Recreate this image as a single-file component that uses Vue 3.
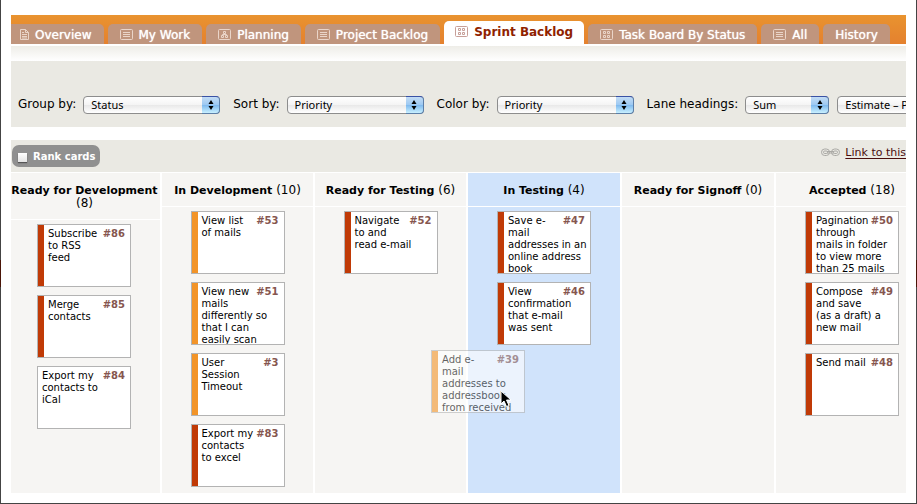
<script setup>
import { ref } from 'vue'

const tabs = [
  { label: 'Overview', icon: 'page' },
  { label: 'My Work', icon: 'list' },
  { label: 'Planning', icon: 'tree' },
  { label: 'Project Backlog', icon: 'list' },
  { label: 'Sprint Backlog', icon: 'grid', active: true },
  { label: 'Task Board By Status', icon: 'grid' },
  { label: 'All', icon: 'list' },
  { label: 'History', icon: null },
]

const filters = ref([
  { id: 'group', label: 'Group by:', value: 'Status' },
  { id: 'sort', label: 'Sort by:', value: 'Priority' },
  { id: 'color', label: 'Color by:', value: 'Priority' },
  { id: 'lane', label: 'Lane headings:', value: 'Sum', small: true },
  { id: 'property', label: '', value: 'Estimate – Points' },
])

const rank = ref(false)

// Each card holds its first line, which shares a row with the number, and the rest.
const lanes = [
  {
    name: 'Ready for Development', count: 8, cards: [
      { id: 86, first: 'Subscribe', rest: 'to RSS\nfeed', color: 'red' },
      { id: 85, first: 'Merge', rest: 'contacts', color: 'red' },
      { id: 84, first: 'Export my', rest: 'contacts to\niCal', color: 'plain' },
    ],
  },
  {
    name: 'In Development', count: 10, cards: [
      { id: 53, first: 'View list', rest: 'of mails', color: 'orange' },
      { id: 51, first: 'View new', rest: 'mails\ndifferently so\nthat I can\neasily scan', color: 'orange' },
      { id: 3, first: 'User', rest: 'Session\nTimeout', color: 'orange' },
      { id: 83, first: 'Export my', rest: 'contacts\nto excel', color: 'red' },
    ],
  },
  {
    name: 'Ready for Testing', count: 6, cards: [
      { id: 52, first: 'Navigate', rest: 'to and\nread e-mail', color: 'red' },
      { id: 39, first: 'Add e-', rest: 'mail\naddresses to\naddressbook\nfrom received', color: 'orange', dragged: true },
    ],
  },
  {
    name: 'In Testing', count: 4, target: true, cards: [
      { id: 47, first: 'Save e-', rest: 'mail\naddresses in an\nonline address\nbook', color: 'red' },
      { id: 46, first: 'View', rest: 'confirmation\nthat e-mail\nwas sent', color: 'red' },
    ],
  },
  { name: 'Ready for Signoff', count: 0, cards: [] },
  {
    name: 'Accepted', count: 18, cards: [
      { id: 50, first: 'Pagination', rest: 'through\nmails in folder\nto view more\nthan 25 mails', color: 'red' },
      { id: 49, first: 'Compose', rest: 'and save\n(as a draft) a\nnew mail', color: 'red' },
      { id: 48, first: 'Send mail', rest: '', color: 'red' },
    ],
  },
]
</script>

<template>
  <div class="frame">
    <div class="page">
      <nav class="tabs" aria-label="Project tabs">
        <a
          v-for="tab in tabs"
          :key="tab.label"
          href="#"
          class="tab"
          :class="{ active: tab.active, 'tab-page': tab.icon === 'page' }"
        >
          <svg v-if="tab.icon === 'page'" class="icon" width="9" height="11" viewBox="0 0 9 11">
            <path d="M.5.5h5l3 3v7h-8zM5.5.5v3h3M2 3.5h2M2 5.5h5M2 7.5h5M2 9h5" />
          </svg>
          <svg v-else-if="tab.icon" class="icon" width="13" height="11" viewBox="0 0 13 11">
            <rect x=".5" y=".5" width="12" height="10" rx="1" />
            <path v-if="tab.icon === 'list'" d="M3 3.5h7M3 5.5h7M3 7.5h7" />
            <path v-else-if="tab.icon === 'tree'" d="M5.500 2.500h2v2h-2zM3.500 6.500h2v2h-2zM7.500 6.500h2v2h-2zM6.500 4.500v1M4.500 6.500v-1h4v1" />
            <path v-else d="M3.500 2.500h2v2h-2zM7.500 2.500h2v2h-2zM3.500 6.500h2v2h-2zM7.500 6.500h2v2h-2z" />
          </svg>
          <span>{{ tab.label }}</span>
        </a>
      </nav>
      <div class="tab-shadow"></div>

      <form class="filters" @submit.prevent>
        <div v-for="f in filters" :key="f.id" class="filter" :class="{ joined: !f.label }">
          <label v-if="f.label" :for="f.id">{{ f.label }}</label>
          <span class="picker" :class="{ small: f.small }">
            <select :id="f.id" v-model="f.value" :aria-label="f.label || 'Lane property'">
              <option>{{ f.value }}</option>
            </select>
            <span class="cap">
              <svg width="6" height="10" viewBox="0 0 6 10"><path d="M3 0l2.500 4h-5zM3 10l2.500-4h-5z" /></svg>
            </span>
          </span>
        </div>
      </form>

      <div class="toolbar">
        <label class="rank" for="rank">
          <input id="rank" v-model="rank" type="checkbox" />
          <span>Rank cards</span>
        </label>
        <a href="#" class="link">
          <svg width="19" height="9" viewBox="0 0 19 9">
            <g fill="none" stroke="#aaa9a5">
              <rect x=".5" y="1" width="8" height="6.500" rx="3.200" />
              <rect x="2.500" y="3" width="4" height="2.500" rx="1.200" />
              <rect x="10.500" y="1" width="8" height="6.500" rx="3.200" />
              <rect x="12.500" y="3" width="4" height="2.500" rx="1.200" />
              <path d="M6 3.500h7M6 5h7" />
            </g>
          </svg>
          <span>Link to this</span>
        </a>
      </div>

      <main class="board">
        <section v-for="lane in lanes" :key="lane.name" class="lane" :class="{ target: lane.target }">
          <h2>{{ lane.name }} <span>({{ lane.count }})</span></h2>
          <div class="cards">
            <article
              v-for="card in lane.cards"
              :key="card.id"
              class="card"
              :class="[card.color, { dragged: card.dragged }]"
            >
              <div class="first"><span>{{ card.first }}</span><b>#{{ card.id }}</b></div>
              <div v-if="card.rest" class="rest">{{ card.rest }}</div>
            </article>
          </div>
        </section>
        <svg class="pointer" width="12" height="19" viewBox="0 0 12 19">
          <path d="M1 1v13l3-3 2.500 5.500 2.500-1-2.500-5.500h4.500z" fill="#000" stroke="#fff" stroke-width="1" />
        </svg>
      </main>
    </div>
  </div>
</template>

<style>
body {
  margin: 0;
  background: #fff;
}
</style>

<style scoped>
.frame {
  box-sizing: border-box;
  min-height: 100vh;
  padding: 0 1px 1px;
  display: flex;
  background: linear-gradient(#444 260px, #4a1508 260px, #4a1508 287px, #444 287px);
  font-family: Verdana, "DejaVu Sans", sans-serif;
  color: #000;
}

.page {
  flex: 1;
  min-width: 0;
  padding: 15px 10px 10px;
  background: #fff;
}

.tabs {
  display: flex;
  align-items: flex-end;
  gap: 4px;
  height: 29px;
  overflow: hidden;
  background: linear-gradient(#e9932f, #e4812f);
}

.tab {
  display: flex;
  align-items: center;
  gap: 6px;
  height: 20px;
  padding: 0 12px;
  border-radius: 5px 5px 0 0;
  background: #c0957d;
  color: #fff;
  font-size: 12px;
  line-height: 20px;
  white-space: nowrap;
  text-decoration: none;
  text-shadow: 0 0 1px #fff;
}

.tab span {
  padding-top: 1px;
}

.tab-page {
  padding-left: 9px;
  border-top-left-radius: 0;
}

.tab.active {
  height: 20px;
  padding: 0 11px 3px;
  background: #fff;
  color: #8f2200;
  font-weight: bold;
  text-shadow: none;
}

.icon {
  flex: none;
  fill: none;
  stroke: #ead5c9;
}

.active .icon {
  stroke: #c79f98;
}

.tab-shadow {
  height: 15px;
  margin: 2px 0 0;
  background: linear-gradient(#eeede8, #fff);
}

.filters {
  display: flex;
  gap: 13px;
  padding: 34px 7px 13px;
  overflow: hidden;
  background: #eae9e3;
}

.filter {
  display: flex;
  flex: none;
  gap: 7px;
  font-size: 12px;
  line-height: 18px;
}

.filter.joined {
  margin-left: -5px;
}

.picker {
  position: relative;
  flex: none;
  width: 137px;
  height: 18px;
  margin-top: 1px;
}

.picker.small {
  width: 84px;
}

.picker select {
  box-sizing: border-box;
  width: 100%;
  height: 18px;
  margin: 0;
  padding: 0 20px 0 7px;
  display: block;
  appearance: none;
  border: 1px solid #8d8d8d;
  border-radius: 4px;
  background: linear-gradient(#fff, #f4f4f4 50%, #e8e8e8 50%, #fff);
  color: #000;
  font: 11px/16px "Lucida Grande", "Noto Sans", sans-serif;
}

.cap {
  position: absolute;
  top: 0;
  right: 0;
  bottom: 0;
  box-sizing: border-box;
  width: 18px;
  display: flex;
  align-items: center;
  justify-content: center;
  border: 1px solid #5d7fa8;
  border-top-color: #3a52a5;
  border-left: 0;
  border-radius: 0 4px 4px 0;
  background: linear-gradient(#c3dcf5, #9cc8f2 50%, #7db8ee 50%, #c8f0ff);
  pointer-events: none;
}

.toolbar {
  display: flex;
  justify-content: space-between;
  align-items: flex-start;
  height: 32px;
  margin-top: 13px;
  overflow: hidden;
  background: #eae9e3;
}

.rank {
  display: flex;
  align-items: center;
  gap: 6px;
  height: 22px;
  margin: 5px 1px;
  padding: 0 5px 0 6px;
  border-radius: 7px;
  background: #909090;
  color: #fff;
  font-size: 10px;
  font-weight: bold;
}

.rank input {
  appearance: none;
  width: 9px;
  height: 9px;
  margin: 3px 0 0;
  background: linear-gradient(#fff, #e4e4e4);
  box-shadow: 0 1px 1px #555;
}

.link {
  display: flex;
  align-items: center;
  gap: 5px;
  margin-top: 5px;
  color: #4a0d0d;
  font-size: 11px;
  line-height: 15px;
  white-space: nowrap;
  text-decoration: none;
}

.link span {
  text-decoration: underline;
  text-underline-offset: 2px;
}

.board {
  position: relative;
  display: grid;
  grid-template-columns:
    minmax(149px, 149fr) repeat(2, minmax(151px, 151fr)) repeat(3, minmax(152px, 152fr));
  gap: 2px;
  margin-top: 1px;
  overflow: hidden;
}

.lane {
  display: flex;
  flex-direction: column;
  background: #f6f5f3;
}

.lane.target {
  background: #d0e3fb;
}

.lane h2 {
  margin: 0;
  padding: 11px 0 9px;
  border-bottom: 1px solid #fff;
  font-size: 11px;
  line-height: 13px;
  text-align: center;
}

.lane h2 span {
  font-size: 12px;
  font-weight: normal;
  line-height: 12px;
}

.cards {
  display: flex;
  flex-direction: column;
  align-items: center;
  gap: 8px;
  padding: 4px 0 6px;
}

.lane:first-child h2 {
  padding-right: 2px;
}

.lane:first-child .cards {
  padding-right: 3px;
}

.card {
  box-sizing: border-box;
  width: 94px;
  height: 63px;
  padding: 3px 5px 0 4px;
  overflow: hidden;
  border: 1px solid #b3b3b3;
  background: #fff;
  font-size: 10px;
  line-height: 12px;
}

.first {
  display: flex;
  justify-content: space-between;
  white-space: nowrap;
}

.first b {
  color: #86564f;
}

.rest {
  white-space: pre;
}

.card.red {
  padding-left: 10px;
  background: linear-gradient(90deg, #c03a06 6px, #fff 6px);
}

.card.orange {
  padding-left: 10px;
  background: linear-gradient(90deg, #f29428 6px, #fff 6px);
}

/* The card in flight and the pointer that carries it lie over the lanes. */
.dragged {
  position: absolute;
  left: 420px;
  top: 177px;
  z-index: 1;
  opacity: 0.6;
}

.pointer {
  position: absolute;
  left: 489px;
  top: 217px;
  z-index: 2;
}
</style>
